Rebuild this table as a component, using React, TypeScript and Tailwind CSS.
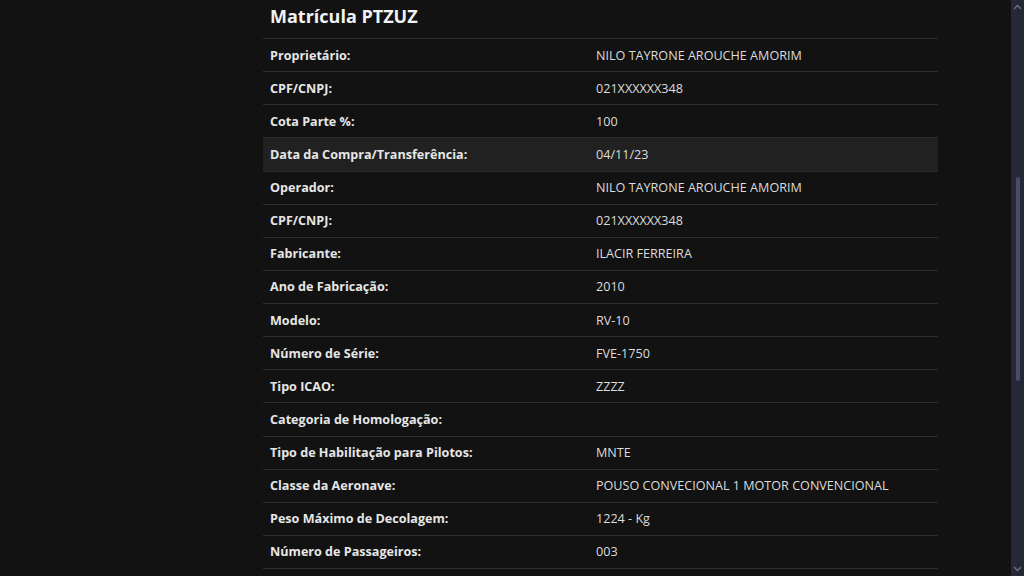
const rows: [string, string, boolean?][] = [
  ['Proprietário:', 'NILO TAYRONE AROUCHE AMORIM'],
  ['CPF/CNPJ:', '021XXXXXX348'],
  ['Cota Parte %:', '100'],
  ['Data da Compra/Transferência:', '04/11/23', true],
  ['Operador:', 'NILO TAYRONE AROUCHE AMORIM'],
  ['CPF/CNPJ:', '021XXXXXX348'],
  ['Fabricante:', 'ILACIR FERREIRA'],
  ['Ano de Fabricação:', '2010'],
  ['Modelo:', 'RV-10'],
  ['Número de Série:', 'FVE-1750'],
  ['Tipo ICAO:', 'ZZZZ'],
  ['Categoria de Homologação:', ''],
  ['Tipo de Habilitação para Pilotos:', 'MNTE'],
  ['Classe da Aeronave:', 'POUSO CONVECIONAL 1 MOTOR CONVENCIONAL'],
  ['Peso Máximo de Decolagem:', '1224 - Kg'],
  ['Número de Passageiros:', '003'],
];

const Scrollbar = () => (
  <div className="w-[13px] h-full bg-[#252837] flex flex-col items-center shrink-0">
    <svg width="9" height="6" viewBox="0 0 9 6" className="mt-[4px]">
      <path d="M1 5 L4.5 1.5 L8 5" stroke="#6b6e84" strokeWidth="1.5" fill="none" />
    </svg>
    <div className="h-[167px]" />
    <div className="w-[4px] h-[204px] rounded-full bg-[#4a4d66] ml-[1px]" />
    <div className="flex-1" />
    <svg width="9" height="6" viewBox="0 0 9 6" className="mb-[4px]">
      <path d="M1 1 L4.5 4.5 L8 1" stroke="#6b6e84" strokeWidth="1.5" fill="none" />
    </svg>
  </div>
);

const App = () => {
  return (
    <div
      className="w-[1024px] h-[576px] overflow-hidden bg-[#121212] flex"
      style={{ fontFamily: '"Open Sans", "Noto Sans", sans-serif' }}
    >
      <div className="flex-1 pl-[263px] pr-[73px]">
        <div className="h-[38px] flex items-center pl-[7px] pb-[6px]">
          <h2 className="text-[18px] font-bold text-[#f2f2f2]">Matrícula PTZUZ</h2>
        </div>
        <div>
          {rows.map(([label, value, hl], i) => (
            <div
              key={i}
              className={`grid grid-cols-[326px_1fr] items-center h-[33.125px] pt-[2px] border-t border-[#2d2d2d] ${
                hl ? 'bg-[#212121]' : ''
              }`}
            >
              <div className="pl-[7px] text-[12.6px] font-bold text-[#e6e6e6]">{label}</div>
              <div className="pl-[7px] text-[12.6px] text-[#dcdcdc]">{value}</div>
            </div>
          ))}
          <div className="border-t border-[#2d2d2d]" />
        </div>
      </div>
      <Scrollbar />
    </div>
  );
};

export default App;
